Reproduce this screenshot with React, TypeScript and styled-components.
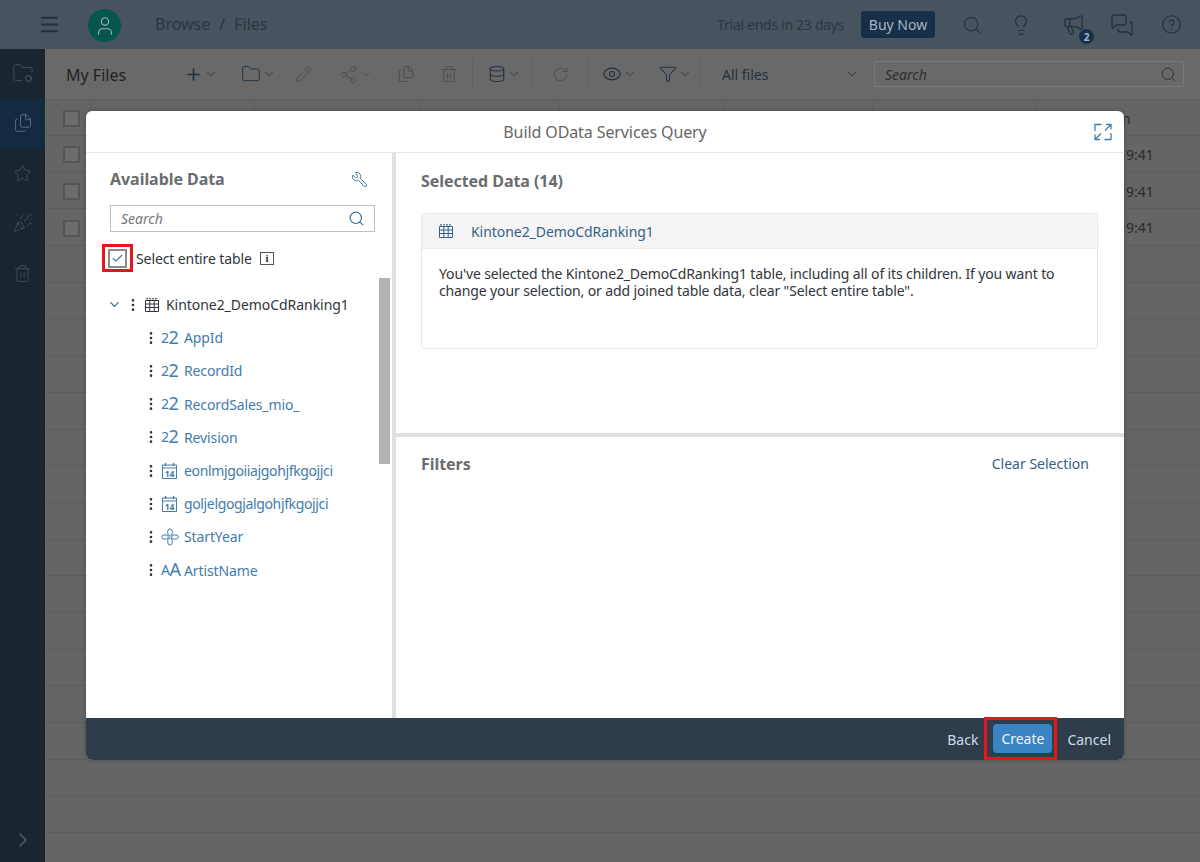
import React from "react";
import styled, { createGlobalStyle } from "styled-components";
import {
  Menu, User, Search, Lightbulb, Megaphone, MessagesSquare, CircleHelp, Plus, ChevronDown, Folder,
  Pencil, Share2, Files, Trash2, Database, RotateCw, Eye, Funnel, FolderCog, Star, PartyPopper,
  ChevronRight, Wrench, Check, EllipsisVertical,
} from "lucide-react";

const FONT = `"Noto Sans", "Liberation Sans", sans-serif`;

const Global = createGlobalStyle`
  html, body { margin: 0; padding: 0; background: #666; }
  * { box-sizing: border-box; }
  body { font-family: ${FONT}; font-size: 14px; }
`;

const Page = styled.div`
  position: relative;
  width: 1200px;
  height: 862px;
  overflow: hidden;
  display: flex;
  flex-direction: column;
`;

const Header = styled.header`
  height: 49px;
  flex: none;
  background: #47535f;
  display: flex;
  align-items: center;
  color: #25313d;
  padding: 0 18px 0 38px;
`;

const Avatar = styled.div`
  width: 33px;
  height: 33px;
  margin-left: 27px;
  margin-top: 2px;
  border-radius: 50%;
  background: #05564e;
  display: flex;
  align-items: center;
  justify-content: center;
  color: #9fb4ae;
`;

const Crumbs = styled.div`
  margin-left: 34px;
  margin-top: -2px;
  font-size: 16px;
  color: #2a3642;
  display: flex;
  gap: 9px;
`;

const HeaderRight = styled.div`
  margin-left: auto;
  display: flex;
  align-items: center;
`;

const Trial = styled.span`
  font-size: 14px;
  color: #2c3844;
  letter-spacing: -0.3px;
`;

const BuyNow = styled.div`
  margin-left: 17px;
  width: 74px;
  height: 27px;
  border-radius: 3px;
  background: #17304a;
  color: #a9b4bf;
  font-size: 14px;
  display: flex;
  align-items: center;
  justify-content: center;
`;

const HeaderIcon = styled.div<{ $ml: number }>`
  position: relative;
  margin-left: ${(p) => p.$ml}px;
  display: flex;
  color: #25313d;
`;

const Badge = styled.span`
  position: absolute;
  right: -9px;
  bottom: -8px;
  width: 15px;
  height: 15px;
  border-radius: 50%;
  background: #17304a;
  color: #a9b4bf;
  font-size: 10px;
  font-weight: 700;
  display: flex;
  align-items: center;
  justify-content: center;
`;

const Body = styled.div`
  flex: 1;
  display: flex;
  min-height: 0;
`;

const Sidebar = styled.nav`
  width: 45px;
  flex: none;
  background: #1a2530;
  display: flex;
  flex-direction: column;
  position: relative;
`;

const SideItem = styled.div<{ $active?: boolean }>`
  height: 50px;
  flex: none;
  padding-bottom: 2px;
  display: flex;
  align-items: center;
  justify-content: center;
  background: ${(p) => (p.$active ? "#132a40" : "transparent")};
  color: ${(p) => (p.$active ? "#5f7184" : "#44525f")};
`;

const SideExpand = styled.div`
  margin-top: auto;
  height: 45px;
  display: flex;
  align-items: center;
  justify-content: center;
  color: #4a5a6a;
`;

const Main = styled.main`
  flex: 1;
  min-width: 0;
  display: flex;
  flex-direction: column;
  background: #656565;
`;

const Toolbar = styled.div`
  height: 51px;
  flex: none;
  display: flex;
  align-items: center;
  padding-left: 21px;
  background: #696969;
  border-bottom: 1px solid #5e5e5e;
  color: #4b5054;
`;

const ToolTitle = styled.div`
  font-size: 16px;
  color: #222;
  width: 118px;
  padding-top: 1px;
`;

const Tool = styled.div<{ $ml: number; $on?: boolean }>`
  margin-left: ${(p) => p.$ml}px;
  display: flex;
  align-items: center;
  gap: 1px;
  color: ${(p) => (p.$on ? "#20303f" : "inherit")};
`;

const ToolSep = styled.div<{ $ml: number }>`
  margin-left: ${(p) => p.$ml}px;
  width: 1px;
  height: 30px;
  background: #5f5f5f;
`;

const FileFilter = styled.div`
  margin-left: 21px;
  width: 138px;
  display: flex;
  justify-content: space-between;
  align-items: center;
  color: #25313d;
  font-size: 14px;
`;

const ToolSearch = styled.div`
  margin-left: 14px;
  width: 310px;
  height: 26px;
  border: 1px solid #7b7b7b;
  border-radius: 1px;
  display: flex;
  align-items: center;
  justify-content: space-between;
  padding: 0 6px 0 10px;
  color: #25313d;
  font-size: 14px;
  font-style: italic;
`;

const SearchHint = styled.span`
  color: #2f2f2f;
`;

const Row = styled.div<{ $head?: boolean }>`
  height: ${(p) => (p.$head ? 36 : 36.7)}px;
  flex: none;
  display: grid;
  grid-template-columns: 46px 164px 165px 140px 165px 148px 164px 1fr;
  border-bottom: 1px solid #5c5c5c;
`;

const Cell = styled.div<{ $line?: boolean }>`
  display: flex;
  align-items: center;
  padding-top: 1px;
  color: #2b2b2b;
  font-size: 14px;
  white-space: nowrap;
  border-right: ${(p) => (p.$line ? "1px solid #5e5e5e" : "none")};
`;

const CheckCell = styled(Cell)`
  padding-left: 18px;
  padding-top: 2px;
`;

const LastCell = styled(Cell)<{ $pad: number }>`
  padding-left: ${(p) => p.$pad}px;
`;

const GhostCheck = styled.div`
  width: 17px;
  height: 17px;
  border: 2px solid #555;
  border-radius: 1px;
  background: #6c6c6c;
`;

const Scrim = styled.div`
  position: absolute;
  inset: 0;
  padding: 111px 76px 102px 86px;
  display: flex;
`;

const Dialog = styled.section`
  flex: 1;
  min-width: 0;
  display: flex;
  flex-direction: column;
  background: #fff;
  border-radius: 6px;
  overflow: hidden;
  box-shadow: 0 0 4px rgba(0, 0, 0, 0.25);
`;

const DialogHead = styled.div`
  height: 42px;
  flex: none;
  display: flex;
  align-items: center;
  justify-content: center;
  position: relative;
  border-bottom: 1px solid #e8e8e8;
  color: #666;
  font-size: 16px;
  letter-spacing: -0.1px;
`;

const ExpandBtn = styled.div`
  position: absolute;
  right: 12px;
  top: 12px;
  display: flex;
  color: #427cac;
`;

const DialogBody = styled.div`
  flex: 1;
  min-height: 0;
  display: flex;
`;

const LeftPane = styled.div`
  width: 310px;
  flex: none;
  position: relative;
  border-right: 4px solid #e0e0e0;
  padding: 0 0 0 24px;
`;

const PaneTitleRow = styled.div`
  height: 52px;
  display: flex;
  align-items: center;
  justify-content: space-between;
  padding-right: 24px;
`;

const PaneTitle = styled.h2`
  margin: 0;
  font-size: 16px;
  font-weight: 700;
  color: #6a6d70;
  letter-spacing: -0.05px;
`;

const ToolIconBlue = styled.div`
  display: flex;
  color: #346f9f;
`;

const WrenchIcon = styled(ToolIconBlue)`
  transform: scaleX(-1);
`;

const SearchBox = styled.div`
  width: 265px;
  height: 27px;
  border: 1px solid #bfbfbf;
  display: flex;
  align-items: center;
  justify-content: space-between;
  padding: 0 9px 0 10px;
  font-size: 14px;
  font-style: italic;
  color: #74777a;
  margin-bottom: 12px;
`;

const SelectRow = styled.div`
  display: flex;
  align-items: center;
  margin-left: -8px;
  height: 28px;
  font-size: 14px;
  color: #32363a;
  letter-spacing: -0.1px;
`;

const Highlight = styled.div`
  width: 31px;
  height: 28px;
  border: 3px solid #e8141c;
  display: flex;
  align-items: center;
  justify-content: center;
  margin-right: 3px;
`;

const CheckBox = styled.div`
  width: 19px;
  height: 19px;
  border: 2px solid #8c8c8c;
  background: #fff;
  display: flex;
  align-items: center;
  justify-content: center;
  color: #2f75b5;
`;

const InfoChip = styled.div`
  width: 14px;
  height: 13px;
  margin-left: 8px;
  border: 1px solid #555;
  font-family: "Liberation Serif", serif;
  font-size: 11px;
  font-weight: 700;
  line-height: 11px;
  text-align: center;
  color: #333;
`;

const Tree = styled.ul`
  list-style: none;
  margin: 16px 0 0 -24px;
  padding: 0;
`;

const TreeRoot = styled.li`
  height: 33.2px;
  display: flex;
  align-items: center;
  padding-left: 21px;
  color: #32363a;
  font-size: 14px;
  letter-spacing: -0.05px;
`;

const TreeChild = styled.li`
  height: 33.2px;
  display: flex;
  align-items: center;
  padding-left: 57px;
  color: #427cac;
  font-size: 14px;
`;

const FieldName = styled.span<{ $tight?: boolean }>`
  letter-spacing: ${(p) => (p.$tight ? "-0.36px" : "-0.12px")};
`;

const Dots = styled.span<{ $ml?: number }>`
  display: flex;
  width: 16px;
  margin-left: ${(p) => p.$ml ?? 0}px;
  color: #333;
  flex: none;
  justify-content: center;
`;

const RootIcon = styled.span`
  display: flex;
  width: 25px;
  padding-left: 3px;
`;

const TypeSlot = styled.span`
  width: 23px;
  margin-left: 2px;
  flex: none;
  display: flex;
  align-items: center;
  height: 20px;
`;

const NumGlyph = styled.span`
  font-size: 18px;
  line-height: 20px;
  letter-spacing: -1px;
`;

const NumSmall = styled.span`
  font-size: 14px;
  position: relative;
  top: -1px;
  letter-spacing: -0.5px;
`;

const Scrollbar = styled.div`
  position: absolute;
  right: 2px;
  top: 125px;
  width: 11px;
  height: 186px;
  background: #b3b3b3;
`;

const RightPane = styled.div`
  flex: 1;
  min-width: 0;
  display: flex;
  flex-direction: column;
`;

const SelectedPane = styled.div`
  height: 284px;
  flex: none;
  padding: 16px 26px 0 25px;
  border-bottom: 4px solid #e0e0e0;
`;

const SelectedTitle = styled(PaneTitle)`
  height: 26px;
  line-height: 24px;
  margin-bottom: 18px;
`;

const Card = styled.div`
  height: 136px;
  border: 1px solid #e8e8e8;
  border-radius: 4px;
  overflow: hidden;
`;

const CardHead = styled.div`
  height: 35px;
  background: #f5f5f5;
  border-bottom: 1px solid #ececec;
  display: flex;
  align-items: center;
  padding-left: 16px;
  gap: 17px;
  color: #346187;
  font-size: 14px;
  letter-spacing: -0.05px;
`;

const CardText = styled.p`
  margin: 16px 17px 0;
  font-size: 14px;
  line-height: 17px;
  letter-spacing: -0.13px;
  color: #32363a;
`;

const FiltersHead = styled.div`
  flex: none;
  height: 53px;
  display: flex;
  align-items: center;
  justify-content: space-between;
  padding: 0 35px 0 25px;
`;

const LinkText = styled.span`
  color: #346187;
  font-size: 14px;
`;

const DialogFoot = styled.div`
  height: 42px;
  flex: none;
  background: #2f3c4a;
  display: flex;
  align-items: center;
  justify-content: flex-end;
  padding-right: 13px;
  color: #cddcea;
  font-size: 14px;
`;

const CreateFrame = styled.div`
  width: 73px;
  height: 43px;
  margin: -1px 10px 0 6px;
  border: 3px solid #e8141c;
  padding-right: 2px;
  display: flex;
  align-items: center;
  justify-content: flex-end;
`;

const CreateBtn = styled.div`
  width: 59px;
  height: 29px;
  border-radius: 4px;
  background: #3b84c4;
  color: #eef3f8;
  display: flex;
  align-items: center;
  justify-content: center;
`;

const TableGlyph = ({ size = 16 }: { size?: number }) => (
  <svg width={size} height={size} viewBox="0 0 16 16" fill="none" stroke="currentColor" strokeWidth="1">
    <path d="M1.5 3.5h13v11h-13zM1.5 7h13M1.5 10.5h13M5.8 3.5v11M10.2 3.5v11" />
    <path d="M3 1v1.5M6 1v1.5M9 1v1.5M12 1v1.5" strokeWidth="1.4" />
  </svg>
);

const CalGlyph = () => (
  <svg width="17" height="18" viewBox="0 0 17 18" fill="none" stroke="currentColor">
    <path d="M1.5 3h14v13.5h-14zM1.5 6h14" />
    <path d="M4.5 1v3M12.5 1v3" strokeWidth="1.4" />
    <text x="8.5" y="14.5" fontSize="8.5" fontWeight="700" textAnchor="middle" fill="currentColor" stroke="none">14</text>
  </svg>
);

const FlowerGlyph = () => (
  <svg width="18" height="18" viewBox="0 0 18 18" fill="none" stroke="currentColor">
    <ellipse cx="9" cy="4.5" rx="2.4" ry="3.6" />
    <ellipse cx="9" cy="13.5" rx="2.4" ry="3.6" />
    <ellipse cx="4" cy="9" rx="3.4" ry="2.2" />
    <ellipse cx="14" cy="9" rx="3.4" ry="2.2" />
  </svg>
);

const ExpandGlyph = () => (
  <svg width="18" height="18" viewBox="0 0 18 18" fill="none" stroke="currentColor" strokeWidth="1.3">
    <path d="M1 8V1.500h6.500M17 10v6.500h-6.500" />
    <path d="M12 1.500h5v5M17 1.500l-6 6M6 16.500H1v-5M1 16.500l6-6" />
  </svg>
);

const Num = () => (
  <NumGlyph><NumSmall>2</NumSmall>2</NumGlyph>
);

const AaGlyph = () => (
  <NumGlyph><NumSmall>A</NumSmall>A</NumGlyph>
);

const fields: { name: string; icon: React.ReactNode; tight?: boolean }[] = [
  { name: "AppId", icon: <Num /> },
  { name: "RecordId", icon: <Num /> },
  { name: "RecordSales_mio_", icon: <Num /> },
  { name: "Revision", icon: <Num /> },
  { name: "eonlmjgoiiajgohjfkgojjci", icon: <CalGlyph />, tight: true },
  { name: "goljelgogjalgohjfkgojjci", icon: <CalGlyph />, tight: true },
  { name: "StartYear", icon: <FlowerGlyph /> },
  { name: "ArtistName", icon: <AaGlyph /> },
];

const rows = Array.from({ length: 20 }, (_, i) => i);
const S = { strokeWidth: 1.35 };
const CH = { size: 14, strokeWidth: 1.3 };

export default function App() {
  return (
    <Page>
      <Global />
      <Header>
        <Menu size={23} strokeWidth={2} />
        <Avatar><User size={22} strokeWidth={1.2} /></Avatar>
        <Crumbs><span>Browse</span><span>/</span><span>Files</span></Crumbs>
        <HeaderRight>
          <Trial>Trial ends in 23 days</Trial>
          <BuyNow>Buy Now</BuyNow>
          <HeaderIcon $ml={27}><Search size={20} {...S} /></HeaderIcon>
          <HeaderIcon $ml={28}><Lightbulb size={22} {...S} /></HeaderIcon>
          <HeaderIcon $ml={30}><Megaphone size={23} {...S} /><Badge>2</Badge></HeaderIcon>
          <HeaderIcon $ml={25}><MessagesSquare size={24} {...S} /></HeaderIcon>
          <HeaderIcon $ml={27}><CircleHelp size={21} {...S} /></HeaderIcon>
        </HeaderRight>
      </Header>
      <Body>
        <Sidebar>
          <SideItem><FolderCog size={22} strokeWidth={1} /></SideItem>
          <SideItem $active><Files size={20} strokeWidth={1.1} /></SideItem>
          <SideItem><Star size={19} strokeWidth={1.1} /></SideItem>
          <SideItem><PartyPopper size={20} strokeWidth={1} /></SideItem>
          <SideItem><Trash2 size={19} strokeWidth={1.1} /></SideItem>
          <SideExpand><ChevronRight size={24} strokeWidth={1.6} /></SideExpand>
        </Sidebar>
        <Main>
          <Toolbar>
            <ToolTitle>My Files</ToolTitle>
            <Tool $ml={0} $on><Plus size={19} strokeWidth={2} /><ChevronDown {...CH} /></Tool>
            <Tool $ml={23} $on><Folder size={20} strokeWidth={1.1} /><ChevronDown {...CH} /></Tool>
            <Tool $ml={19}><Pencil size={17} {...S} /></Tool>
            <Tool $ml={27}><Share2 size={19} strokeWidth={1.2} /><ChevronDown {...CH} /></Tool>
            <Tool $ml={24}><Files size={18} {...S} /></Tool>
            <Tool $ml={25}><Trash2 size={18} {...S} /></Tool>
            <ToolSep $ml={14} />
            <Tool $ml={15} $on><Database size={18} {...S} /><ChevronDown {...CH} /></Tool>
            <ToolSep $ml={11} />
            <Tool $ml={19}><RotateCw size={17} {...S} /></Tool>
            <ToolSep $ml={18} />
            <Tool $ml={14} $on><Eye size={20} {...S} /><ChevronDown {...CH} /></Tool>
            <Tool $ml={22} $on><Funnel size={18} {...S} /><ChevronDown {...CH} /></Tool>
            <ToolSep $ml={8} />
            <FileFilter>All files<ChevronDown size={16} strokeWidth={1.3} /></FileFilter>
            <ToolSearch><SearchHint>Search</SearchHint><Search size={17} {...S} /></ToolSearch>
          </Toolbar>
          <Row $head>
            <CheckCell $line><GhostCheck /></CheckCell>
            <Cell $line /><Cell $line /><Cell $line /><Cell $line /><Cell $line /><Cell $line />
            <LastCell $pad={85}>n</LastCell>
          </Row>
          {rows.map((i) => (
            <Row key={i}>
              <CheckCell>{i < 3 && <GhostCheck />}</CheckCell>
              <Cell /><Cell /><Cell /><Cell /><Cell /><Cell />
              <LastCell $pad={89}>{i < 3 ? "9:41" : ""}</LastCell>
            </Row>
          ))}
        </Main>
      </Body>

      <Scrim>
        <Dialog>
          <DialogHead>
            Build OData Services Query
            <ExpandBtn><ExpandGlyph /></ExpandBtn>
          </DialogHead>
          <DialogBody>
            <LeftPane>
              <PaneTitleRow>
                <PaneTitle>Available Data</PaneTitle>
                <WrenchIcon><Wrench size={17} strokeWidth={1.3} /></WrenchIcon>
              </PaneTitleRow>
              <SearchBox>Search<ToolIconBlue><Search size={17} strokeWidth={1.6} /></ToolIconBlue></SearchBox>
              <SelectRow>
                <Highlight><CheckBox><Check size={13} strokeWidth={2} /></CheckBox></Highlight>
                Select entire table
                <InfoChip>i</InfoChip>
              </SelectRow>
              <Tree>
                <TreeRoot>
                  <ToolIconBlue><ChevronDown size={15} strokeWidth={2} /></ToolIconBlue>
                  <Dots $ml={3}><EllipsisVertical size={16} strokeWidth={2} /></Dots>
                  <RootIcon><TableGlyph /></RootIcon>
                  Kintone2_DemoCdRanking1
                </TreeRoot>
                {fields.map((f) => (
                  <TreeChild key={f.name}>
                    <Dots><EllipsisVertical size={16} strokeWidth={2} /></Dots>
                    <TypeSlot>{f.icon}</TypeSlot>
                    <FieldName $tight={f.tight}>{f.name}</FieldName>
                  </TreeChild>
                ))}
              </Tree>
              <Scrollbar />
            </LeftPane>
            <RightPane>
              <SelectedPane>
                <SelectedTitle>Selected Data (14)</SelectedTitle>
                <Card>
                  <CardHead><TableGlyph />Kintone2_DemoCdRanking1</CardHead>
                  <CardText>
                    You've selected the Kintone2_DemoCdRanking1 table, including all of its children. If you want to
                    change your selection, or add joined table data, clear "Select entire table".
                  </CardText>
                </Card>
              </SelectedPane>
              <FiltersHead>
                <PaneTitle>Filters</PaneTitle>
                <LinkText>Clear Selection</LinkText>
              </FiltersHead>
            </RightPane>
          </DialogBody>
          <DialogFoot>
            Back
            <CreateFrame><CreateBtn>Create</CreateBtn></CreateFrame>
            Cancel
          </DialogFoot>
        </Dialog>
      </Scrim>
    </Page>
  );
}
